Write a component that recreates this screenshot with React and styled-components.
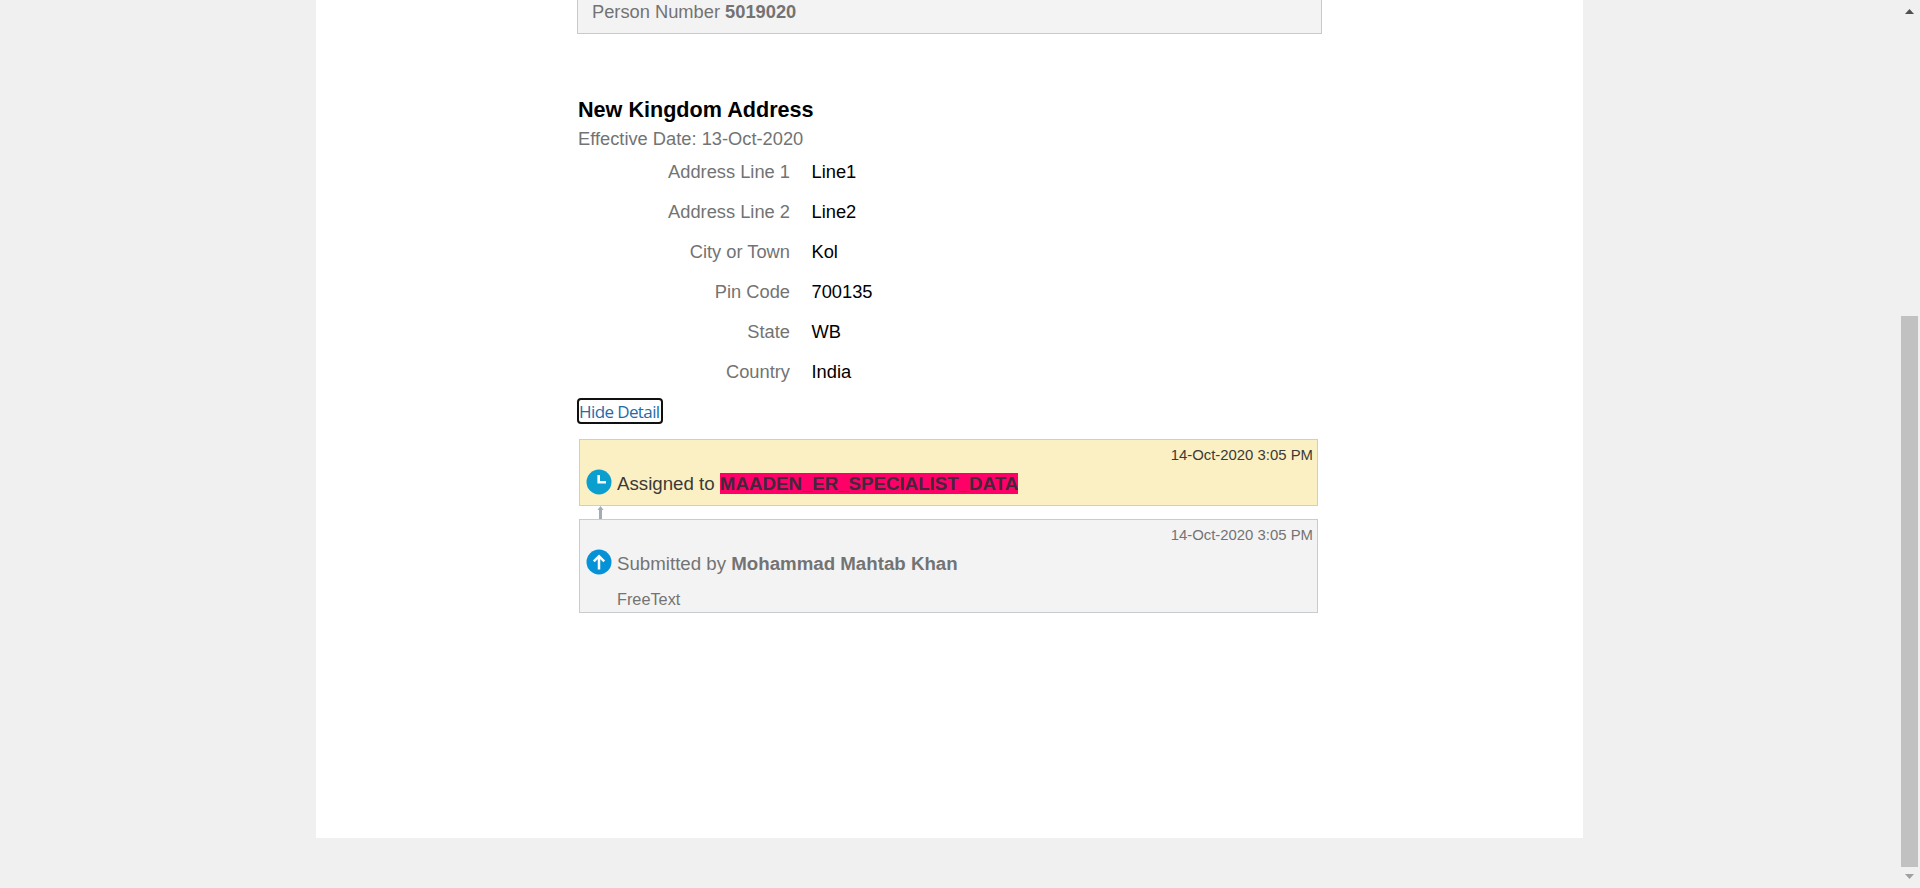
import React from "react";
import styled, { createGlobalStyle } from "styled-components";

const GlobalStyle = createGlobalStyle`
  * { box-sizing: border-box; }
  body {
    margin: 0;
    background: #f0f0f0;
    font-family: "Liberation Sans", Arial, sans-serif;
    font-size: 18.3px;
    line-height: 20px;
    color: #737373;
    overflow: hidden;
  }
`;

const Page = styled.div`
  display: flex;
  height: 888px;
  padding-left: 316px;
`;

const Sheet = styled.main`
  width: 1267px;
  height: 838px;
  margin-right: auto;
  padding-left: 261px;
  background: #fff;
`;

const Column = styled.div`
  display: flex;
  flex-direction: column;
  align-items: flex-start;
  width: 745px;
`;

const PersonBox = styled.section`
  width: 100%;
  height: 34px;
  padding: 2px 14px 0;
  border: 1px solid #c9c9c9;
  border-top: 0;
  background: #f3f3f3;
`;

const Title = styled.h2`
  margin: 63px 0 0 1px;
  font-size: 21.6px;
  line-height: 26px;
  font-weight: bold;
  color: #000;
`;

const Effective = styled.p`
  margin: 6px 0 3px 1px;
`;

const Fields = styled.dl`
  margin: 0;
`;

const Field = styled.div`
  display: grid;
  grid-template-columns: 213px 1fr;
  column-gap: 21.5px;
  line-height: 40px;
`;

const Label = styled.dt`
  text-align: right;
`;

const Value = styled.dd`
  margin: 0;
  color: #000;
`;

const DetailLink = styled.button`
  width: 86px;
  height: 26px;
  margin: 6px 0 15px;
  padding: 1px 0 0;
  border: 2px solid #101010;
  border-radius: 4px;
  background: #fff;
  color: #1f6ca6;
  font: 400 17px/21px "Open Sans", "Noto Sans", sans-serif;
  letter-spacing: -0.6px;
  text-align: left;
  white-space: nowrap;
`;

const History = styled.div`
  display: flex;
  flex-direction: column;
  width: 739px;
  margin-left: 2px;
`;

const Card = styled.article`
  display: flex;
  flex-direction: column;
  height: ${(p) => (p.$current ? 67 : 94)}px;
  padding: 5px 4px 0 6px;
  border: 1px solid ${(p) => (p.$current ? "#eecf72" : "#c9ccce")};
  background: ${(p) => (p.$current ? "#fbf0c3" : "#f3f3f3")};
  color: ${(p) => (p.$current ? "#3b3a36" : "#737373")};
`;

const Stamp = styled.time`
  align-self: flex-end;
  font-size: 14.9px;
  line-height: 20px;
`;

const Entry = styled.div`
  display: flex;
  align-items: center;
  gap: 5px;
  height: 26px;
  margin-top: 5px;
  font-size: 18.7px;

  svg { margin-top: -3px; flex: none; }
`;

const EntryText = styled.span`
  padding-top: 1px;
`;

const Highlight = styled.strong`
  background: #ff0068;
  color: #43283a;
`;

const Note = styled.p`
  margin: 14px 0 0 31px;
  font-size: 16.3px;
  line-height: 18px;
`;

const Connector = styled.div`
  height: 13px;
  padding-left: 18px;
  line-height: 0;
`;

const ScrollTrack = styled.div`
  display: flex;
  flex-direction: column;
  align-items: center;
  width: 19px;
  height: 888px;
  padding: 9px 2px 9px 0;
`;

const Thumb = styled.div`
  width: 17px;
  height: 551px;
  margin: auto 0 7px;
  background: #c1c1c1;
`;

const ClockIcon = () => (
  <svg width="26" height="26" viewBox="0 0 26 26">
    <circle cx="13" cy="13" r="12.5" fill="#0a9fce" />
    <path d="M12.7 6v7.3H20" fill="none" stroke="#fff" strokeWidth="2.6" />
  </svg>
);

const UpIcon = () => (
  <svg width="26" height="26" viewBox="0 0 26 26">
    <circle cx="13" cy="13" r="12.5" fill="#0592d7" />
    <path d="M13 20.5V7.5M7.8 12.3L13 7.2l5.2 5.1" fill="none" stroke="#fff" strokeWidth="2.5" />
  </svg>
);

const fields = [
  ["Address Line 1", "Line1"],
  ["Address Line 2", "Line2"],
  ["City or Town", "Kol"],
  ["Pin Code", "700135"],
  ["State", "WB"],
  ["Country", "India"],
];

export default function App() {
  return (
    <>
      <GlobalStyle />
      <Page>
        <Sheet>
          <Column>
            <PersonBox>
              Person Number <strong>5019020</strong>
            </PersonBox>
            <Title>New Kingdom Address</Title>
            <Effective>Effective Date: 13-Oct-2020</Effective>
            <Fields>
              {fields.map(([label, value]) => (
                <Field key={label}>
                  <Label>{label}</Label>
                  <Value>{value}</Value>
                </Field>
              ))}
            </Fields>
            <DetailLink>Hide Detail</DetailLink>
            <History>
              <Card $current>
                <Stamp>14-Oct-2020 3:05 PM</Stamp>
                <Entry>
                  <ClockIcon />
                  <EntryText>
                    Assigned to <Highlight>MAADEN_ER_SPECIALIST_DATA</Highlight>
                  </EntryText>
                </Entry>
              </Card>
              <Connector>
                <svg width="7" height="13" viewBox="0 0 7 13">
                  <path d="M3.5 0L6.5 4H5v9H2V4H.5z" fill="#a3abb3" />
                </svg>
              </Connector>
              <Card>
                <Stamp>14-Oct-2020 3:05 PM</Stamp>
                <Entry>
                  <UpIcon />
                  <EntryText>
                    Submitted by <strong>Mohammad Mahtab Khan</strong>
                  </EntryText>
                </Entry>
                <Note>FreeText</Note>
              </Card>
            </History>
          </Column>
        </Sheet>
        <ScrollTrack>
          <svg width="9" height="5" viewBox="0 0 9 5">
            <path d="M0 5L4.5 0L9 5z" fill="#505050" />
          </svg>
          <Thumb />
          <svg width="9" height="5" viewBox="0 0 9 5">
            <path d="M0 0h9L4.5 5z" fill="#a0a0a0" />
          </svg>
        </ScrollTrack>
      </Page>
    </>
  );
}
